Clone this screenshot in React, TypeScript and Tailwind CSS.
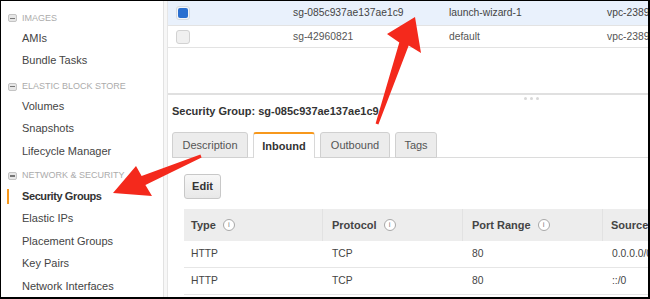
import React from "react";

const FONT = { fontFamily: '"Liberation Sans", Arial, sans-serif' };

function Minus() {
  return (
    <span className="mr-[5px] flex h-[8px] w-[9px] shrink-0 items-center justify-center rounded-[2px] border border-[#c4c4c4] bg-[#e6e6e6]">
      <span className="h-[1.5px] w-[5px] bg-[#777]" />
    </span>
  );
}

function Header({ label, mt }: { label: string; mt: string }) {
  return (
    <div className={`flex h-[14px] items-center pl-[7px] text-[9px] text-[#ababab] ${mt}`}>
      <Minus />
      <span>{label}</span>
    </div>
  );
}

function Item({ label, active }: { label: string; active?: boolean }) {
  return (
    <div className="relative flex h-[22.5px] items-center pl-[21px] text-[11px] text-[#444]">
      {active && <span className="absolute left-[6px] top-[4px] h-[15px] w-[2px] bg-[#f7981c]" />}
      <span className={active ? "font-bold tracking-[-0.4px] text-[#333]" : ""}>{label}</span>
    </div>
  );
}

function Info() {
  return (
    <span className="ml-[7px] inline-flex h-[12px] w-[12px] shrink-0 items-center justify-center rounded-full border border-[#a8a8a8] bg-white text-[8px] font-normal text-[#888]">
      i
    </span>
  );
}

export default function App() {
  return (
    <div
      style={FONT}
      className="relative flex h-[299px] w-[650px] overflow-hidden border-t border-l border-r-2 border-b-2 border-black bg-white"
    >
      {/* Sidebar */}
      <div className="flex w-[163px] shrink-0 flex-col border-r border-[#e2e2e2] bg-white pt-[10.5px]">
        <Header label="IMAGES" mt="" />
        <div className="mt-[1.5px]">
          <Item label="AMIs" />
          <Item label="Bundle Tasks" />
        </div>
        <Header label="ELASTIC BLOCK STORE" mt="mt-[8px]" />
        <div className="mt-[1.5px]">
          <Item label="Volumes" />
          <Item label="Snapshots" />
          <Item label="Lifecycle Manager" />
        </div>
        <Header label="NETWORK & SECURITY" mt="mt-[7px]" />
        <div className="mt-[1.5px]">
          <Item label="Security Groups" active />
          <Item label="Elastic IPs" />
          <Item label="Placement Groups" />
          <Item label="Key Pairs" />
          <Item label="Network Interfaces" />
        </div>
      </div>

      <div className="w-[3px] shrink-0 bg-[#f7f7f7]" />

      {/* Main */}
      <div className="flex min-w-0 flex-1 flex-col overflow-hidden border-l border-[#e6e6e6]">
        {/* list rows */}
        <div className="flex h-[25px] shrink-0 items-center border-b border-[#e3e3e3] bg-[#e9f1fc] text-[10.3px] text-[#444]">
          <div className="ml-[8px] flex h-[14px] w-[14px] shrink-0 items-center justify-center rounded-[3px] border border-[#d4d9e0] bg-[#f4f6f8]">
            <span className="h-[10px] w-[10px] rounded-[2px] bg-[#2a6fd0]" />
          </div>
          <span className="ml-[103px] w-[156px] shrink-0 whitespace-nowrap">sg-085c937ae137ae1c9</span>
          <span className="w-[158px] shrink-0 whitespace-nowrap">launch-wizard-1</span>
          <span className="shrink-0 whitespace-nowrap">vpc-23896</span>
        </div>
        <div className="flex h-[22px] shrink-0 items-center border-b border-[#e3e3e3] text-[10.3px] text-[#555]">
          <div className="ml-[8px] h-[14px] w-[14px] shrink-0 rounded-[3px] border border-[#d2d2d2] bg-[#f0f0f0]" />
          <span className="ml-[103px] w-[156px] shrink-0 whitespace-nowrap">sg-42960821</span>
          <span className="w-[158px] shrink-0 whitespace-nowrap">default</span>
          <span className="shrink-0 whitespace-nowrap">vpc-23896</span>
        </div>
        <div className="h-[45px] shrink-0" />
        {/* splitter */}
        <div className="relative h-[2px] shrink-0 bg-[#e0e0e0]">
          <div className="absolute left-[356px] top-[4px] flex gap-[3px]">
            <span className="h-[3px] w-[3px] rounded-full bg-[#d8d8d8]" />
            <span className="h-[3px] w-[3px] rounded-full bg-[#d8d8d8]" />
            <span className="h-[3px] w-[3px] rounded-full bg-[#d8d8d8]" />
          </div>
        </div>

        {/* details panel */}
        <div className="flex flex-col pl-[4px]">
          <div className="mt-[9px] h-[14px] text-[11px] font-bold leading-[14px] text-[#333]">
            Security Group: sg-085c937ae137ae1c9
          </div>
          <div className="mt-[14px] flex h-[26px] items-end border-b border-[#dcdcdc] text-[11px]">
            <div className="-mb-px flex h-[26px] w-[76px] shrink-0 items-center justify-center rounded-t-[3px] border border-[#d0d0d0] bg-[#ececec] text-[#555]">
              Description
            </div>
            <div className="-mb-px ml-[5px] flex h-[26px] w-[62px] shrink-0 items-center justify-center rounded-t-[3px] border border-b-0 border-t-2 border-[#d8d8d8] border-t-[#f7981c] bg-white font-bold text-[#333]">
              Inbound
            </div>
            <div className="-mb-px ml-[5px] flex h-[26px] w-[70px] shrink-0 items-center justify-center rounded-t-[3px] border border-[#d0d0d0] bg-[#ececec] text-[#555]">
              Outbound
            </div>
            <div className="-mb-px ml-[5px] flex h-[26px] w-[42px] shrink-0 items-center justify-center rounded-t-[3px] border border-[#d0d0d0] bg-[#ececec] text-[#555]">
              Tags
            </div>
            <div className="flex-1" />
          </div>

          <div className="pl-[12px]">
            <div className="mt-[16px] flex h-[25px] w-[37px] items-center justify-center rounded-[3px] border border-[#c8c8c8] bg-gradient-to-b from-[#f7f7f7] to-[#e8e8e8] text-[11px] font-bold text-[#333]">
              Edit
            </div>
            <div className="mt-[10px] w-[600px]">
              <div className="flex h-[32px] items-center bg-[#ededed] text-[11px] font-bold text-[#444]">
                <div className="flex h-full w-[139px] shrink-0 items-center border-r border-[#e2e2e2] pl-[7px]">
                  Type <Info />
                </div>
                <div className="flex h-full w-[140px] shrink-0 items-center border-r border-[#e2e2e2] pl-[9px]">
                  Protocol <Info />
                </div>
                <div className="flex h-full w-[140px] shrink-0 items-center border-r border-[#e2e2e2] pl-[9px]">
                  Port Range <Info />
                </div>
                <div className="flex h-full items-center whitespace-nowrap pl-[8px]">Source</div>
              </div>
              <div className="flex h-[27px] items-center border-b border-[#e6e6e6] text-[10.3px] text-[#444]">
                <div className="w-[139px] shrink-0 pl-[7px]">HTTP</div>
                <div className="w-[140px] shrink-0 pl-[9px]">TCP</div>
                <div className="w-[140px] shrink-0 pl-[9px]">80</div>
                <div className="whitespace-nowrap pl-[9px]">0.0.0.0/0</div>
              </div>
              <div className="flex h-[27px] items-center border-b border-[#e6e6e6] text-[10.3px] text-[#444]">
                <div className="w-[139px] shrink-0 pl-[7px]">HTTP</div>
                <div className="w-[140px] shrink-0 pl-[9px]">TCP</div>
                <div className="w-[140px] shrink-0 pl-[9px]">80</div>
                <div className="whitespace-nowrap pl-[9px]">::/0</div>
              </div>
            </div>
          </div>
        </div>
      </div>

      {/* Red arrows overlay */}
      <svg
        className="pointer-events-none absolute left-[-1px] top-[-1px]"
        width="650"
        height="299"
        viewBox="0 0 650 299"
      >
        <polygon
          fill="#f4291c"
          points="415,17 421,53 408.7,45.6 378.4,124.5 375.6,123.5 399.3,42.4 387,34"
        />
        <polygon
          fill="#f4291c"
          points="113,193 136,166 141.6,175.9 200.4,154.6 201.6,157.4 145.4,185.1 152,196"
        />
      </svg>
    </div>
  );
}
